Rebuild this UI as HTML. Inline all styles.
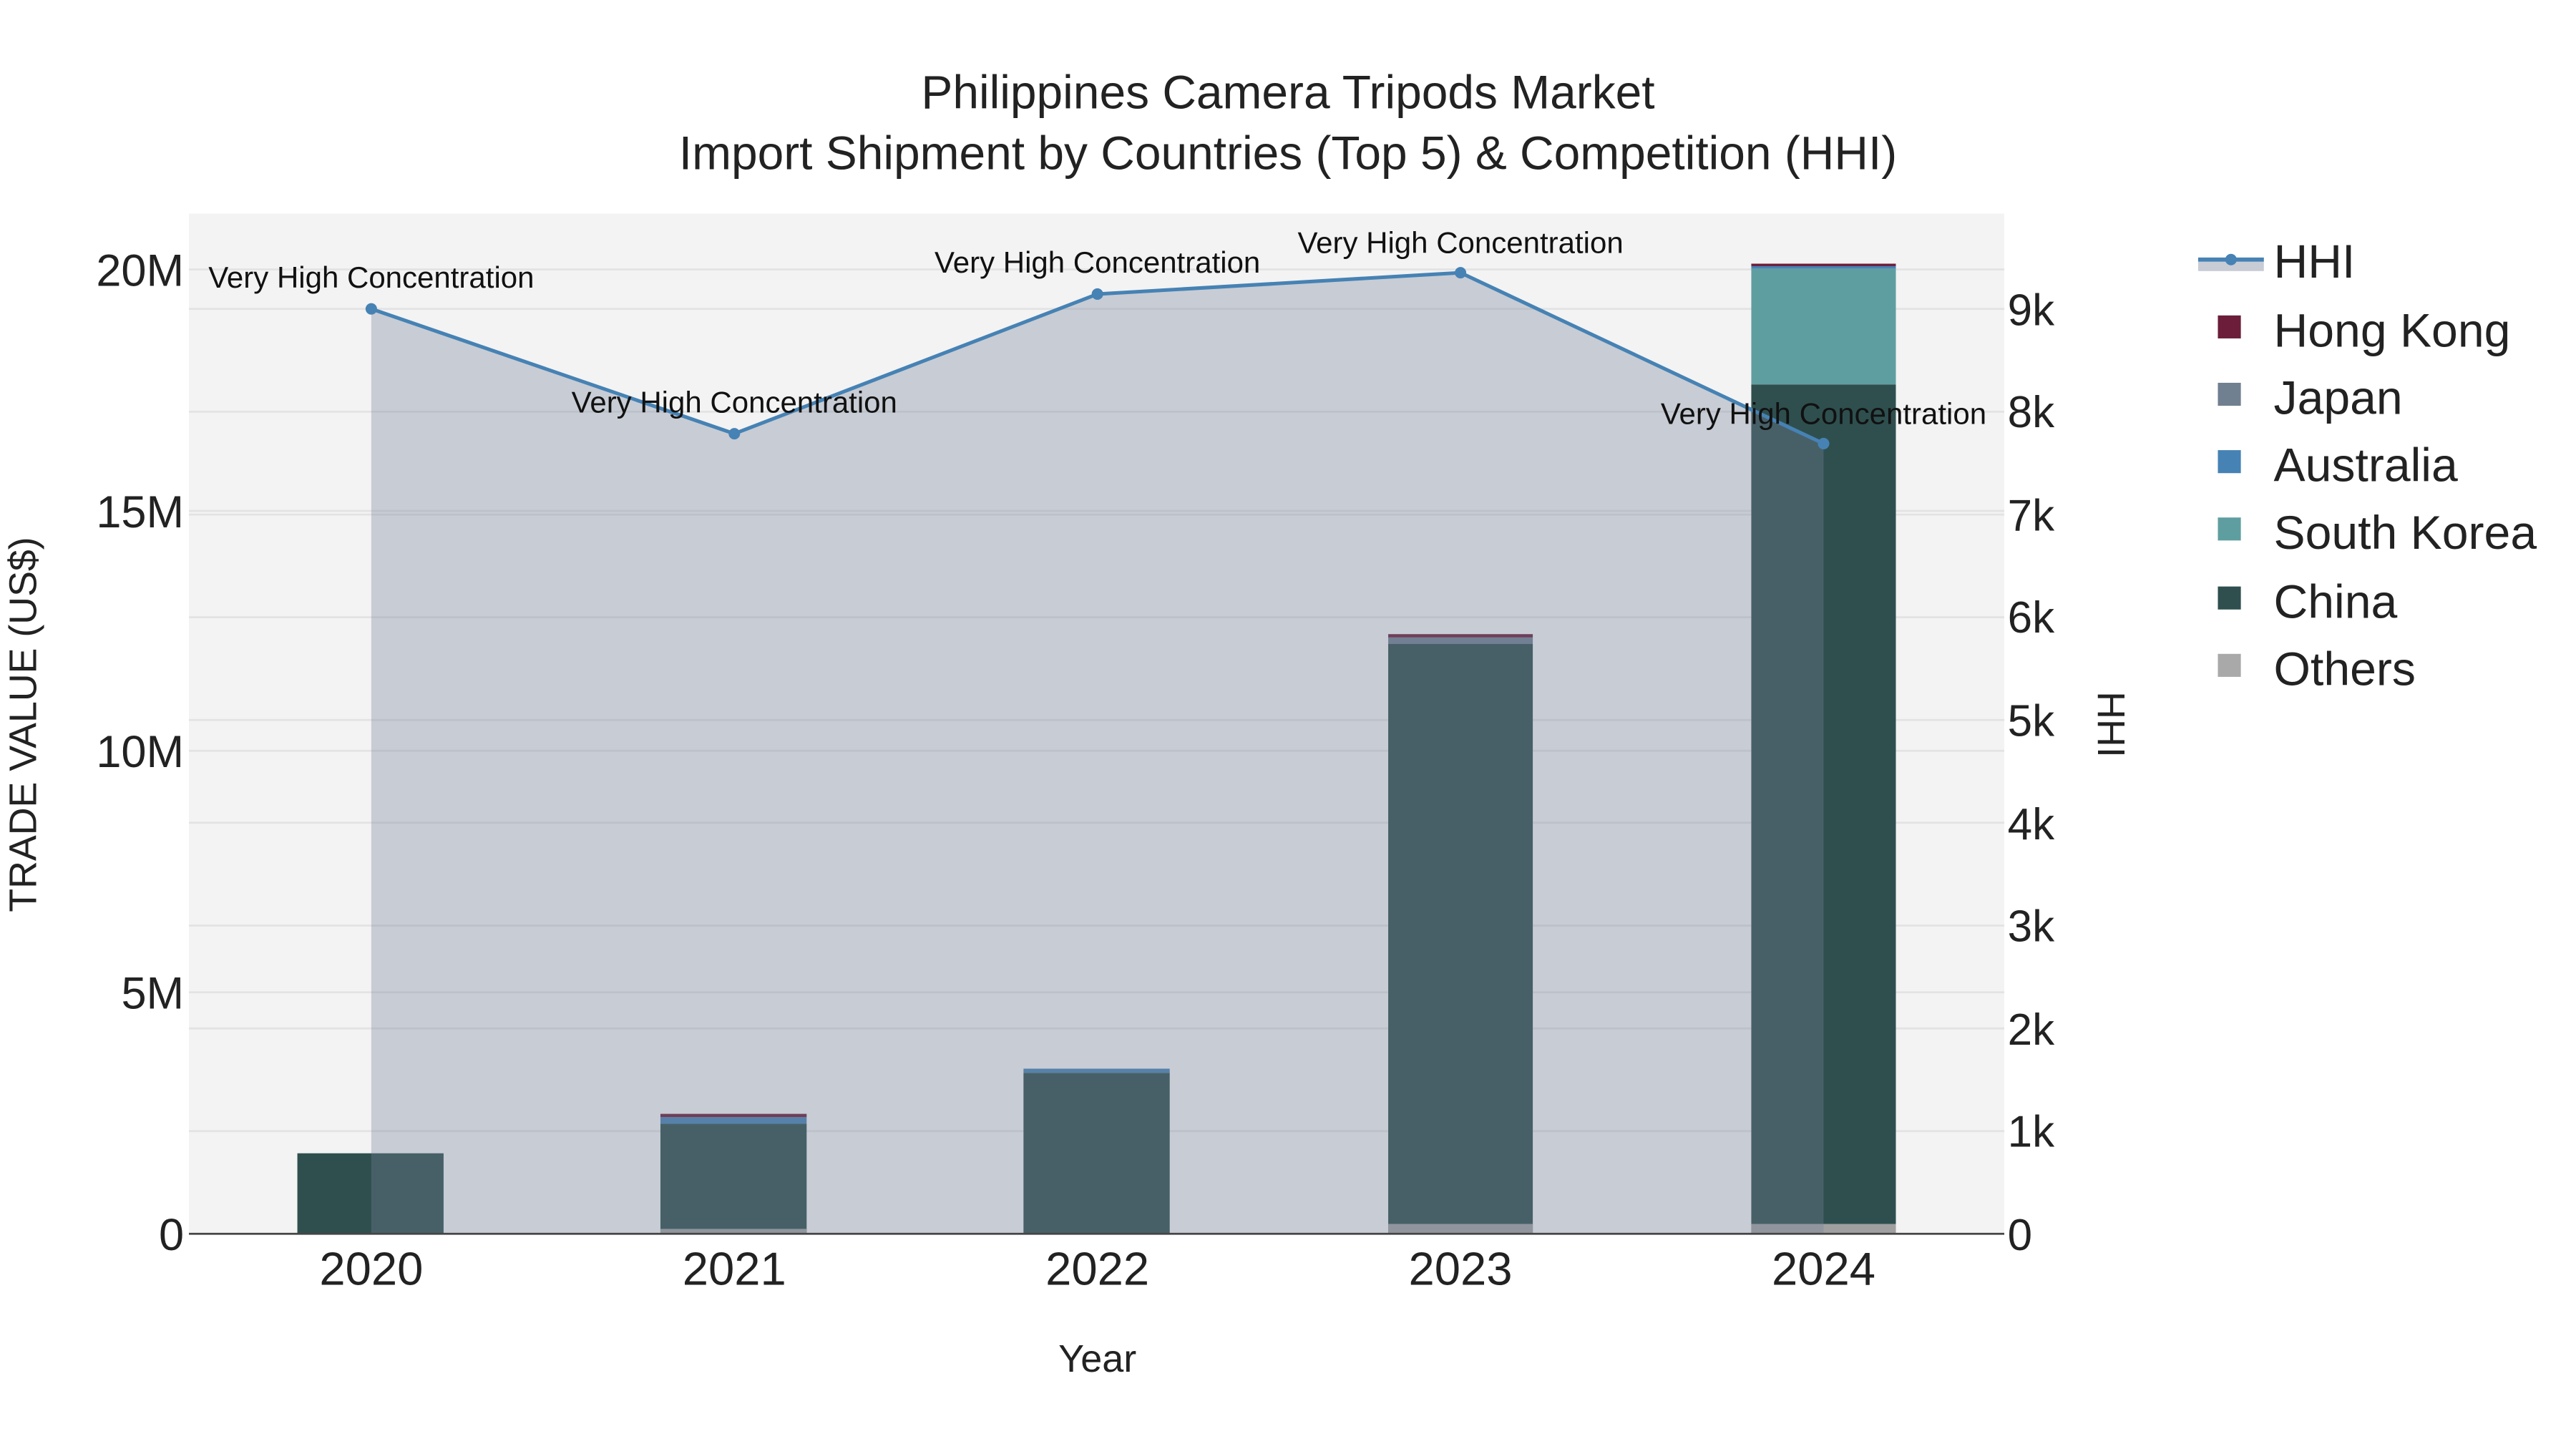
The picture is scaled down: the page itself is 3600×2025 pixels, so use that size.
<!DOCTYPE html>
<html><head><meta charset="utf-8"><style>
html,body{margin:0;padding:0;background:#fff;}
svg{display:block;}
text{font-family:"Liberation Sans",Arial,sans-serif;}
</style></head><body>
<svg width="3600" height="2025" viewBox="0 0 1568 882" preserveAspectRatio="none" xmlns="http://www.w3.org/2000/svg">
<rect width="1568" height="882" fill="#fff"/>
<rect x="115" y="130" width="1105" height="621" fill="#f3f3f3"/>
<g stroke="#e3e3e3" stroke-width="1.2">
<line x1="115" x2="1220" y1="604" y2="604"/><line x1="115" x2="1220" y1="457" y2="457"/>
<line x1="115" x2="1220" y1="311" y2="311"/><line x1="115" x2="1220" y1="164" y2="164"/>
<line x1="115" x2="1220" y1="688.5" y2="688.5"/><line x1="115" x2="1220" y1="626" y2="626"/>
<line x1="115" x2="1220" y1="563.4" y2="563.4"/><line x1="115" x2="1220" y1="500.8" y2="500.8"/>
<line x1="115" x2="1220" y1="438.3" y2="438.3"/><line x1="115" x2="1220" y1="375.7" y2="375.7"/>
<line x1="115" x2="1220" y1="313.2" y2="313.2"/><line x1="115" x2="1220" y1="250.6" y2="250.6"/>
<line x1="115" x2="1220" y1="188" y2="188"/>
</g>
<rect x="181" y="702" width="89" height="49" fill="#2f4f4f"/>
<rect x="402" y="684" width="89" height="67" fill="#2f4f4f"/>
<rect x="402" y="680" width="89" height="4" fill="#4682b4"/>
<rect x="402" y="678" width="89" height="2" fill="#6b1d3a"/>
<rect x="402" y="748" width="89" height="3" fill="#a0a0a0"/>
<rect x="623" y="653" width="89" height="98" fill="#2f4f4f"/>
<rect x="623" y="650.5" width="89" height="2.5" fill="#4682b4"/>
<rect x="845" y="392" width="88" height="359" fill="#2f4f4f"/>
<rect x="845" y="388" width="88" height="4" fill="#708090"/>
<rect x="845" y="386" width="88" height="2" fill="#6b1d3a"/>
<rect x="845" y="745" width="88" height="6" fill="#a0a0a0"/>
<rect x="1066" y="234" width="88" height="517" fill="#2f4f4f"/>
<rect x="1066" y="163.5" width="88" height="70.5" fill="#5f9ea0"/>
<rect x="1066" y="162" width="88" height="1.5" fill="#4682b4"/>
<rect x="1066" y="160.5" width="88" height="1.5" fill="#6b1d3a"/>
<rect x="1066" y="745" width="88" height="6" fill="#a0a0a0"/>
<polygon points="226,751 226,188 447,264 668,179 889,166 1110,270 1110,751" fill="rgb(116,128,152)" fill-opacity="0.34"/>
<line x1="115" x2="1220" y1="751" y2="751" stroke="#444" stroke-width="1.2"/>
<polyline points="226,188 447,264 668,179 889,166 1110,270" fill="none" stroke="#4682b4" stroke-width="2.2"/>
<g fill="#4682b4"><circle cx="226" cy="188" r="3.5"/><circle cx="447" cy="264" r="3.5"/><circle cx="668" cy="179" r="3.5"/><circle cx="889" cy="166" r="3.5"/><circle cx="1110" cy="270" r="3.5"/></g>
<g font-size="18.3" fill="#111" text-anchor="middle">
<text x="226" y="175">Very High Concentration</text>
<text x="447" y="251">Very High Concentration</text>
<text x="668" y="166">Very High Concentration</text>
<text x="889" y="154">Very High Concentration</text>
<text x="1110" y="258">Very High Concentration</text>
</g>
<g text-anchor="middle" fill="#222">
<text x="784" y="66" font-size="28.7">Philippines Camera Tripods Market</text>
<text x="784" y="103" font-size="28.7">Import Shipment by Countries (Top 5) &amp; Competition (HHI)</text>
<text x="668" y="835" font-size="23.5">Year</text>
</g>
<g font-size="27.5" fill="#222" text-anchor="end">
<text x="112" y="761">0</text><text x="112" y="614">5M</text><text x="112" y="467">10M</text><text x="112" y="321">15M</text><text x="112" y="174">20M</text>
</g>
<g font-size="27" fill="#222">
<text x="1222" y="761">0</text><text x="1222" y="698">1k</text><text x="1222" y="636">2k</text><text x="1222" y="573">3k</text><text x="1222" y="511">4k</text><text x="1222" y="448">5k</text><text x="1222" y="385">6k</text><text x="1222" y="323">7k</text><text x="1222" y="260">8k</text><text x="1222" y="198">9k</text>
</g>
<g font-size="28.4" fill="#222" text-anchor="middle">
<text x="226" y="782">2020</text><text x="447" y="782">2021</text><text x="668" y="782">2022</text><text x="889" y="782">2023</text><text x="1110" y="782">2024</text>
</g>
<text transform="translate(22,441) rotate(-90)" font-size="23.4" fill="#222" text-anchor="middle">TRADE VALUE (US$)</text>
<text transform="translate(1277,441) rotate(90)" font-size="23.4" fill="#222" text-anchor="middle">HHI</text>
<rect x="1338" y="157" width="40" height="8" fill="#c8ccd4"/>
<line x1="1338" x2="1378" y1="158" y2="158" stroke="#4682b4" stroke-width="2.5"/>
<circle cx="1358" cy="158" r="3.5" fill="#4682b4"/>
<rect x="1350" y="192" width="14" height="14" fill="#6b1d3a"/>
<rect x="1350" y="233" width="14" height="14" fill="#708090"/>
<rect x="1350" y="274" width="14" height="14" fill="#4682b4"/>
<rect x="1350" y="315" width="14" height="14" fill="#5f9ea0"/>
<rect x="1350" y="357" width="14" height="14" fill="#2f4f4f"/>
<rect x="1350" y="398" width="14" height="14" fill="#a9a9a9"/>
<g font-size="28.8" fill="#222">
<text x="1384" y="169">HHI</text><text x="1384" y="211">Hong Kong</text><text x="1384" y="252">Japan</text><text x="1384" y="293">Australia</text><text x="1384" y="334">South Korea</text><text x="1384" y="376">China</text><text x="1384" y="417">Others</text>
</g>
</svg>
</body></html>
